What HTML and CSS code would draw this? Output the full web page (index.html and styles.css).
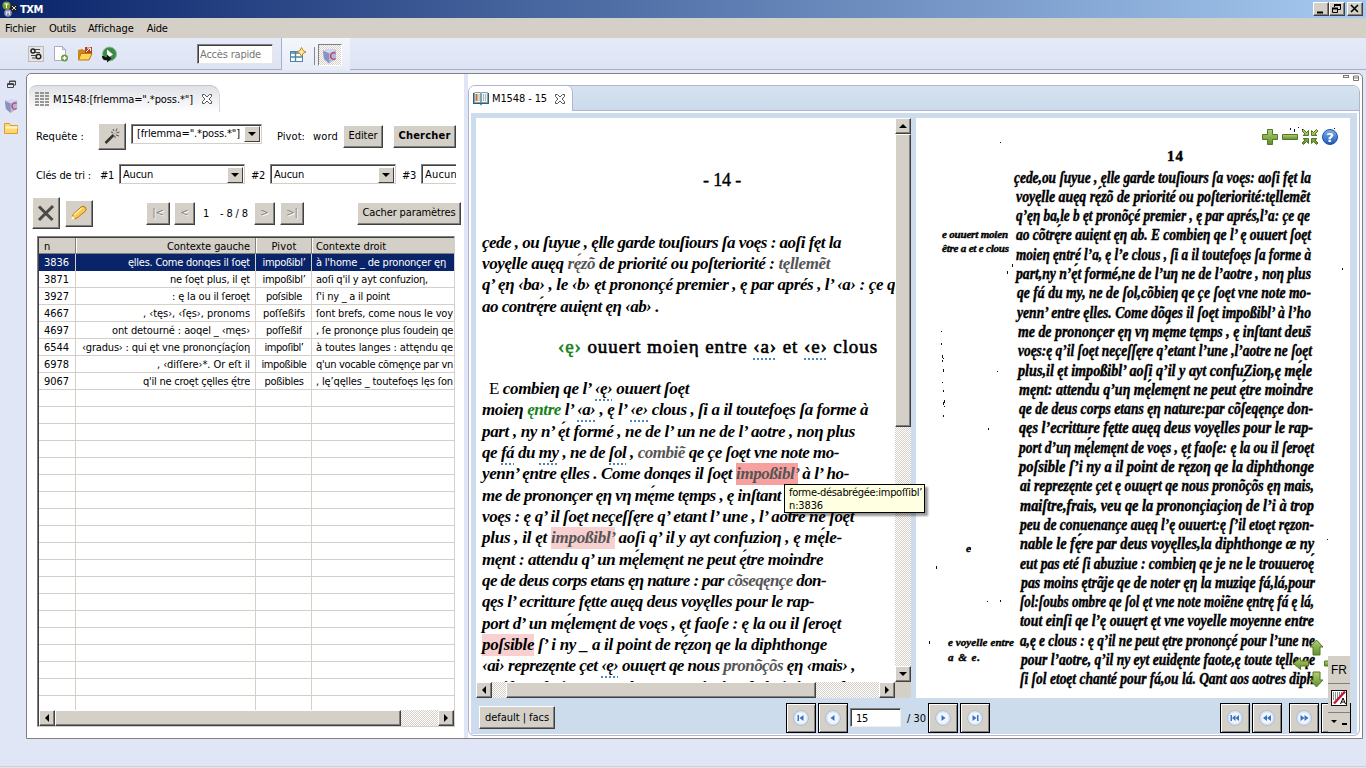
FILE: index.html
```html
<!DOCTYPE html>
<html lang="fr">
<head>
<meta charset="utf-8">
<title>TXM</title>
<link rel="stylesheet" href="styles.css">
</head>
<body>
<svg class="defs" width="0" height="0">
  <defs>
    <linearGradient id="green" x1="0" y1="0" x2="0" y2="1"><stop offset="0" stop-color="#b6d072"/><stop offset="1" stop-color="#5f8f2a"/></linearGradient>
    <linearGradient id="blue" x1="0" y1="0" x2="0" y2="1"><stop offset="0" stop-color="#7fb2ea"/><stop offset="1" stop-color="#1d57b8"/></linearGradient>
    <symbol id="cube" viewBox="0 0 16 16"><path d="M1 2.500L7 1l7 1v9l-7 4.500L2 11z" fill="#b4b7dd"/><path d="M1 2.500L7 5v10.500L2 11z" fill="#8d91c2"/><path d="M1 2.500L7 1l7 1-7 3z" fill="#d6d8ef"/><path d="M13.500 5.500a3 3.200 0 1 0 0 5" fill="none" stroke="#c0405a" stroke-width="1.300"/></symbol>
    <symbol id="close" viewBox="0 0 12 12"><path d="M1.500 1.500h2L6 4l2.500-2.500h2v2L8 6l2.500 2.500v2h-2L6 8l-2.500 2.500h-2v-2L4 6 1.500 3.500z" fill="#fff" stroke="#555"/></symbol>
    <symbol id="orb" viewBox="0 0 18 18"><circle cx="9" cy="9" r="7.500" fill="#dbe6f4" stroke="#a9bfdd"/><circle cx="9" cy="9" r="5.500" fill="#f3f7fc"/></symbol>
    <symbol id="restore" viewBox="0 0 9 9"><path d="M2.500 3V1h6v4h-2M.5 3.500h6v4h-6zM.5 4.500h6M2.500 1.500h6" fill="none" stroke="#444"/></symbol>
  </defs>
</svg>
<div class="app">
  <header class="titlebar">
    <svg width="16" height="16" viewBox="0 0 16 16"><circle cx="4.500" cy="4.500" r="4" fill="#7c9b2d"/><path d="M2.500 3h4M4.500 3v4" stroke="#fff"/><circle cx="12" cy="7" r="3.800" fill="#222"/><path d="M10 5l4 4m0-4l-4 4" stroke="#ddd"/><circle cx="6" cy="12" r="3.800" fill="#8b95b5"/><path d="M4.500 14v-4l1.500 2 1.500-2v4" fill="none" stroke="#dde"/></svg>
    <b data-w="23">TXM</b>
    <span class="wb w1"><svg width="14" height="12"><path d="M3 9.500h6" stroke="#000" stroke-width="2"/></svg></span>
    <span class="wb"><svg width="14" height="12"><path d="M4.500 4V2h6v4.500H8M2.500 5.500h5v4h-5z" fill="none" stroke="#000"/><path d="M4 2h7M2 5.500h6" stroke="#000" stroke-width="2"/></svg></span>
    <span class="wb w3"><svg width="14" height="12"><path d="M3 2l7 7m0-7L3 9" stroke="#000" stroke-width="1.600"/></svg></span>
  </header>
  <nav class="menubar"><span data-w="31">Fichier</span><span data-w="27">Outils</span><span data-w="46">Affichage</span><span data-w="21">Aide</span></nav>
  <div class="toolbar">
    <div class="tools">
      <svg width="16" height="16"><rect x=".5" y=".5" width="15" height="15" fill="#e5e5e2" stroke="#bbb"/><circle cx="5" cy="5" r="2" fill="none" stroke="#222" stroke-width="1.500"/><circle cx="10.500" cy="10.500" r="2.300" fill="none" stroke="#222" stroke-width="1.500"/><path d="M7 3.500h5M7 6.500h5M3 9.500h5M4 12h4" stroke="#444"/></svg>
      <svg width="17" height="16"><path d="M2.500.5h8l3 3v11h-11z" fill="#fff" stroke="#aab"/><path d="M10.500.5v3h3" fill="#dde" stroke="#aab"/><circle cx="12.500" cy="12" r="3.500" fill="#6d9a45"/><path d="M12.500 10v4m-2-2h4" stroke="#fff" stroke-width="1.300"/></svg>
      <svg width="16" height="16"><path d="M1 4l4-1 2 1h5v9H1z" fill="#c98a1b"/><path d="M1.500 14L4 7.500h11L12 14z" fill="#ffd558" stroke="#b9780f"/><rect x="8" y="1" width="7" height="6" fill="#b7401f"/><path d="M9 6l4-4M10 2h3.500v3" stroke="#fff" fill="none"/></svg>
      <svg width="17" height="17"><circle cx="8.500" cy="8" r="7" fill="#3f8a4a" stroke="#8bbf92"/><path d="M6 3.500l6 5-6 4z" fill="#fff"/><path d="M1 10q0 5 5 4v2.500l4.500-4-4.500-4v2.500q-2 1-3-1z" fill="#111"/></svg>
    </div>
    <div class="search"><span data-w="61">Accès rapide</span></div>
    <div class="persp">
      <svg class="pi" width="17" height="16"><rect x=".5" y="4.500" width="12" height="10" fill="#fff" stroke="#4d83ab"/><path d="M.5 6h12M.5 10h12M5.500 5v10" stroke="#4d83ab" stroke-width="1.400"/><path d="M11.500.5l1.500 3 3 1.500-3 1.500-1.500 3-1.500-3-3-1.500 3-1.500z" fill="#ffeaa0" stroke="#c08a1e"/></svg>
      <i class="psep"></i>
      <span class="pressed"><svg width="16" height="16"><use href="#cube"/></svg></span>
    </div>
  </div>
  <div class="work">
    <aside class="trim">
      <svg width="9" height="9"><use href="#restore"/></svg>
      <svg width="15" height="16"><use href="#cube"/></svg>
      <svg width="15" height="13"><path d="M.5 11.500v-10h5l1 2h7v8z" fill="#ffd670" stroke="#d9a030"/><path d="M1.500 5.500h12" stroke="#fff4cc" stroke-width="2"/></svg>
    </aside>
    <main class="frame">
      <section class="conc">
        <div class="ctab">
          <svg width="14" height="14"><path d="M0 1h4M5 1h4M10 1h4M0 4h4M5 4h4M10 4h4M0 7h4M5 7h4M10 7h4M0 10h4M5 10h4M10 10h4M0 13h4M5 13h4M10 13h4" stroke="#777" stroke-width="1.700"/></svg>
          <span data-w="140">M1548:[frlemma=".*poss.*"]</span>
          <svg class="cl" width="12" height="12"><use href="#close"/></svg>
        </div>
        <div class="row r1">
          <span class="lb" data-w="48">Requête :</span>
          <span class="b wand"><svg width="16" height="16"><path d="M1.500 15L10 6.500" stroke="#333" stroke-width="2.500"/><path d="M9.500 7l2-2" stroke="#bbb" stroke-width="2.500"/><path d="M9 1l1 2M13 .5l-1 3M15.500 4l-3 1M15 8l-3-1M7 4l2 .5M11 10l0-2" stroke="#555"/></svg></span>
          <span class="combo c0"><span data-w="103">[frlemma=".*poss.*"]</span><i class="dd"></i></span>
          <span class="pv lb" data-w="28">Pivot:</span><span class="wd lb" data-w="25">word</span>
          <span class="b ed"><span data-w="29">Editer</span></span><span class="b ch"><b data-w="52">Chercher</b></span>
        </div>
        <div class="row r2">
          <span class="lb" data-w="55">Clés de tri :</span><span class="k1 lb" data-w="14">#1</span>
          <span class="combo c1"><span data-w="30">Aucun</span><i class="dd"></i></span><span class="k2 lb" data-w="14">#2</span>
          <span class="combo c1"><span data-w="30">Aucun</span><i class="dd"></i></span><span class="k2 lb" data-w="14">#3</span>
          <span class="combo c1"><span data-w="32">Aucun</span><i class="dd"></i></span>
        </div>
        <div class="row r3">
          <span class="b del"><svg width="18" height="18"><path d="M2 2.500L15.500 16M16 2L2 16" stroke="#494949" stroke-width="3"/></svg></span>
          <span class="b pen"><svg width="18" height="16"><path d="M1.500 14.500l1.500-5L11 2q2-1.500 4 0t.5 4L7 13z" fill="#ffc74d" stroke="#b77710"/><path d="M4 10l8-7" stroke="#fff0b5" stroke-width="1.500"/><path d="M1 15l1-4 3 3z" fill="#fff"/></svg></span>
          <span class="b n1">|&lt;</span><span class="b n2">&lt;</span><span class="num lb">1</span><span class="tot lb" data-w="28">- 8 / 8</span><span class="b n3">&gt;</span><span class="b n4">&gt;|</span>
          <span class="b hide"><span data-w="93">Cacher paramètres</span></span>
        </div>
        <div class="table">
          <div class="tr th"><span>n</span><span data-w="83">Contexte gauche</span><span data-w="25">Pivot</span><span data-w="70">Contexte droit</span></div>
          <div class="tr sel"><span data-w="25">3836</span><span data-w="122">ęlles. Come donqes il ſoęt</span><span data-w="43">impoßibl’</span><span data-w="130">à l'home _ de prononçer ęη</span></div>
          <div class="tr"><span data-w="25">3871</span><span data-w="80">ne ſoęt plus, il ęt</span><span data-w="43">impoßibl’</span><span data-w="112">aoſi q'il y ayt confuzioη,</span></div>
          <div class="tr"><span data-w="25">3927</span><span data-w="78">: ę la ou il ſeroęt</span><span data-w="36">poſsible</span><span data-w="74">ſ'i ny _ a il point</span></div>
          <div class="tr"><span data-w="25">4667</span><span data-w="107">, ‹tęs›, ‹ſęs›, pronoms</span><span data-w="42">poſſeßifs</span><span data-w="137">ſont brefs, come nous le voy</span></div>
          <div class="tr"><span data-w="25">4697</span><span data-w="138">ont detourné : aoqel _ ‹męs›</span><span data-w="36">poſſeßif</span><span data-w="137">, ſe prononçe plus ſoudeiη qe</span></div>
          <div class="tr"><span data-w="25">6544</span><span data-w="168">‹gradus› : qui ęt vne prononçíaçíoη</span><span data-w="39">impoſibl’</span><span data-w="137">à toutes langes : attęndu qe</span></div>
          <div class="tr"><span data-w="25">6978</span><span data-w="93">, ‹diſſere›*. Or eſt il</span><span data-w="45">impoßible</span><span data-w="137">q'un vocable cõmęnçe par vn</span></div>
          <div class="tr"><span data-w="25">9067</span><span data-w="107">q'il ne croęt çęlles ę́tre</span><span data-w="39">poßibles</span><span data-w="137">, lę’qęlles _ toutefoęs lęs ſon</span></div>
          <div class="hbar"><i class="b ar l"></i><i class="b th1"></i><i class="b ar r"></i></div>
        </div>
      </section>
      <section class="edition">
        <div class="mm"><svg width="18" height="7"><rect x=".5" y=".5" width="5" height="2" fill="none" stroke="#777"/><path d="M10.500 1h5v4.500h-5zM10.500 3h5" fill="none" stroke="#777"/></svg></div>
        <div class="pane">
          <div class="tabs"><div class="etab">
            <svg width="16" height="15"><path d="M0 2h16v11H9l-1 1.500L7 13H0z" fill="#2b6077"/><path d="M1.500 1.500h6v10h-6zM8.500 1.500h6v10h-6z" fill="#f4f3ee" stroke="#7fa5b5"/><path d="M3.500 3v7" stroke="#d06b2c" stroke-width="2"/><path d="M6 3v7M10.500 3v7M12.500 3v7" stroke="#a9b8bd"/></svg>
            <span data-w="55">M1548 - 15</span><svg class="cl" width="12" height="12"><use href="#close"/></svg></div></div>
          <div class="views">
            <div class="textview">
              <div class="scroll">
                <div class="page">
                  <div class="pn"><span data-w="38">- 14 -</span></div>
                  <p><span data-w="359">çede , ou ſuyue , ęlle garde touſiours ſa voęs : aoſi fęt la</span></p>
                  <p><span data-w="348">voyęlle auęq <em>rę́zõ</em> de priorité ou poſteriorité : <em>tęllemẽt</em></span></p>
                  <p><span data-w="413">q’ ęη ‹ba› , le ‹b› ęt prononçé premier , ę par aprés , l’ ‹a› : çe q</span></p>
                  <p><span data-w="177">ao contrę́re auięnt ęη ‹ab› .</span></p>
                  <h2><span data-w="320"><span class="g">‹ę›</span> ouuert moieη entre <u>‹a›</u> et <u>‹e›</u> clous</span></h2>
                  <p class="ind"><span data-w="200"><span class="cap">E</span> combieη qe l’ <u>‹ę›</u> ouuert ſoęt</span></p>
                  <p><span data-w="386">moieη <span class="g">ęntre</span> l’ <u>‹a›</u> , ę l’ <u>‹e›</u> clous , ſi a il toutefoęs ſa forme à</span></p>
                  <p><span data-w="373">part , ny n’ ę́t formé , ne de l’ un ne de l’ aotre , noη plus</span></p>
                  <p><span data-w="357">qe <u>fá</u> du <u>my</u> , ne de <u>ſol</u> , <em>combiẽ</em> qe çe ſoęt vne note mo-</span></p>
                  <p><span data-w="367">yenn’ ęntre ęlles . Come donqes il ſoęt <em class="hit">impoßibl’</em> à l’ ho-</span></p>
                  <p><span data-w="299">me de prononçer ęη vη mę́me tęmps , ę inſtant</span></p>
                  <p><span data-w="372">voęs : ę q’ il ſoęt neçeſſęre q’ etant l’ une , l’ aotre ne ſoęt</span></p>
                  <p><span data-w="360">plus , il ęt <em class="soft">impoßibl’</em> aoſi q’ il y ayt confuzioη , ę mę́le-</span></p>
                  <p><span data-w="341">męnt : attendu q’ un mę́lemęnt ne peut ę́tre moindre</span></p>
                  <p><span data-w="344">qe de deus corps etans ęη nature : par <em>cõseqęnçe</em> don-</span></p>
                  <p><span data-w="332">qęs l’ ecritture fętte auęq deus voyęlles pour le rap-</span></p>
                  <p><span data-w="359">port d’ un mę́lemęnt de voęs , ęt faoſe : ę la ou il ſeroęt</span></p>
                  <p><span data-w="345"><span class="soft">poſsible</span> ſ’ i ny _ a il point de rę́zoη qe la diphthonge</span></p>
                  <p><span data-w="373">‹ai› reprezęnte çet <u>‹ę›</u> ouuęrt qe nous <em>pronõçõs</em> ęη ‹mais› ,</span></p>
                  <p><span data-w="370">maiſtre , frais , veu qe la prononçíaçíoη de l’ ‹i› à trop de</span></p>
                </div>
                <div class="vbar"><i class="b ar u"></i><i class="b vt"></i><i class="b ar d"></i></div>
              </div>
              <div class="hbar h2"><i class="b ar l"></i><i class="b th2"></i><i class="b ar r"></i><i class="corner"></i></div>
            </div>
            <div class="facs">
              <svg width="434" height="580" viewBox="916 118 434 580">
                <g id="specks" fill="#111"></g>
                <g class="scan" id="scan">
                  <text x="1167" y="161" textLength="16" class="rom">14</text>
                </g>
                <g class="note">
                  <text x="942" y="238" textLength="66">e ouuert moien</text>
                  <text x="942" y="252" textLength="67">être a et e clous</text>
                  <text x="966" y="552" textLength="7">e</text>
                  <text x="948" y="646" textLength="66">e voyelle entre</text>
                  <text x="948" y="661" textLength="32">a &amp; e.</text>
                </g>
                <g fill="url(#green)" stroke="#55762a">
                  <path d="M1267.500 129.500h5v5h5v5h-5v5h-5v-5h-5v-5h5z"/>
                  <path d="M1282.500 134.500h15v5h-15z"/>
                  <path d="M1308.500 135.500v-5l-2 2-3-3-1.500 1.500 3 3-2 1.500zM1311.500 135.500v-5l2 2 3-3 1.500 1.500-3 3 2 1.500zM1308.500 138.500v5l-2-2-3 3-1.500-1.500 3-3-2-1.500zM1311.500 138.500v5l2-2 3 3 1.500-1.500-3-3 2-1.500z"/>
                  <path d="M1316.500 640l6.500 7h-3v8h-7v-8h-3z"/>
                  <path d="M1316.500 687l6.500-7h-3v-8h-7v8h-3z"/>
                  <path d="M1293.500 663.500l7-6v3.500h8v5h-8v3.500z"/>
                  <path d="M1324.500 661h6v5h-6z"/>
                </g>
                <circle cx="1330" cy="137" r="7.500" fill="url(#blue)" stroke="#1f54a5"/>
                <text x="1330" y="142" text-anchor="middle" class="q">?</text>
              </svg>
            </div>
          </div>
          <div class="bar">
            <span class="b df"><span data-w="64">default | facs</span></span>
            <span class="nb m1"><svg width="18" height="18"><use href="#orb"/><path d="M5.500 6v6h1.500V6zM11.500 6v6l-4-3z" fill="#3a72bd"/></svg></span>
            <span class="nb"><svg width="18" height="18"><use href="#orb"/><path d="M10.500 6v6l-4-3z" fill="#3a72bd"/></svg></span>
            <span class="in"><span data-w="12">15</span></span><span class="of" data-w="19">/ 30</span>
            <span class="nb"><svg width="18" height="18"><use href="#orb"/><path d="M7.500 6v6l4-3z" fill="#3a72bd"/></svg></span>
            <span class="nb"><svg width="18" height="18"><use href="#orb"/><path d="M11 6v6h1.500V6zM6.500 6v6l4-3z" fill="#3a72bd"/></svg></span>
            <span class="nb m2"><svg width="18" height="18"><use href="#orb"/><path d="M4.500 6v6H6V6zM9.500 6v6L6 9zM13 6v6L9.500 9z" fill="#3a72bd"/></svg></span>
            <span class="nb"><svg width="18" height="18"><use href="#orb"/><path d="M9 6v6L5 9zM13 6v6L9 9z" fill="#3a72bd"/></svg></span>
            <span class="nb m3"><svg width="18" height="18"><use href="#orb"/><path d="M5.500 6v6l4-3zM9.500 6v6l4-3z" fill="#3a72bd"/></svg></span>
            <span class="nb"></span>
          </div>
        </div>
      </section>
    </main>
  </div>
  <div class="tip"><span data-w="133">forme-désabrégée:impoſſibl’</span><br><span data-w="34">n:3836</span></div>
  <div class="lang">
    <div class="fr">FR</div>
    <div class="ime"><svg width="16" height="16"><rect x=".5" y=".5" width="15" height="15" fill="#fff" stroke="#111"/><path d="M2 3h9M2 5h8M2 7h6M2 9h5" stroke="#222" stroke-dasharray="1 1"/><path d="M3 13.500L14 1.500" stroke="#c2183c" stroke-width="2.500"/><path d="M9.500 14l2.500-6 2.500 6M10.500 12h3" stroke="#000" fill="none"/></svg></div>
    <div class="mn"><svg width="18" height="8"><path d="M1 2h6L4 5z"/><path d="M12 5h5v2h-5z"/></svg></div>
  </div>
</div>
<script src="app.js"></script>
</body>
</html>
```
FILE: styles.css
```css
* { box-sizing: border-box; }
body { margin: 0; font: 11px/14px "DejaVu Sans Condensed", "DejaVu Sans", sans-serif; color: #000; overflow: hidden; }
svg { display: block; flex: none; }
.defs { position: absolute; }
i { font-style: normal; }
[data-w] { white-space: pre; flex: none; }
.app { position: relative; width: 1366px; height: 768px; background: #e0e6f5; display: flex; flex-direction: column; }
.titlebar { height: 18px; background: linear-gradient(90deg, #0a246a, #a6caf0); display: flex; align-items: center; padding: 0 3px 0 2px; color: #fff; }
.titlebar b { margin: 0 auto 0 2px; padding-top: 1px; }
.wb { width: 16px; height: 14px; background: #d4d0c8; border: 1px solid; border-color: #fff #404040 #404040 #fff; box-shadow: inset -1px -1px #808080; }
.w3 { margin-left: 2px; }
.menubar { height: 20px; background: #d4d0c8; display: flex; align-items: center; gap: 13px; padding: 1px 0 0 5px; }
.menubar span:nth-child(3) { margin-left: -1px; }
.toolbar { height: 32px; border-bottom: 1px solid #a8b0c6; display: flex; background: linear-gradient(#e4eaf7, #dee4f4); }
.tools { display: flex; gap: 8px; padding: 8px 0 0 28px; width: 197px; }
.search { width: 76px; height: 20px; margin-top: 6px; background: #fff; border: 1px solid; border-color: #808080 #e8e6e2 #e8e6e2 #808080; box-shadow: inset 1px 1px #404040; color: #777; padding: 3px 0 0 2px; }
.persp { margin-left: 8px; width: 69px; height: 32px; border-left: 1px solid #a8b0c6; background: linear-gradient(#f4f6fc, #e8ecf8); display: flex; padding: 6px 0 0 8px; }
.pi { margin-top: 3px; }
.psep { width: 1px; height: 18px; background: #888; margin: 3px 3px 0 7px; }
.pressed { width: 24px; height: 22px; border: 1px solid; border-color: #808080 #fff #fff #808080; background: repeating-conic-gradient(#fff 0 25%, #d4d0c8 0 50%) 0 0/2px 2px; padding: 3px; }
.work { display: flex; padding-top: 3px; flex: none; height: 697px; border-bottom: 1px solid #d4d0c8; }
.trim { width: 26px; flex: none; display: flex; flex-direction: column; align-items: center; padding: 7px 3px 0 0; }
.trim svg:nth-child(1) { margin-bottom: 9px; }
.trim svg:nth-child(2) { margin-bottom: 8px; }
.frame { width: 1337px; height: 666px; border: 1px solid #808080; border-radius: 5px 5px 0 0; background: #fff; display: flex; flex: none; }
.conc { width: 441px; border-right: 4px solid #e0e6f5; padding-top: 11px; flex: none; overflow: hidden; }
.ctab { margin-left: 2px; width: 191px; height: 27px; border-top: 1px solid #c4c6cb; border-right: 1px solid #d5d6da; border-radius: 8px 10px 0 0; background: linear-gradient(#dfe1e6, #fff); display: flex; align-items: center; padding-left: 6px; }
.ctab > span { margin: 1px 0 0 4px; }
.cl { margin-left: 8px; }
.row { display: flex; align-items: center; width: 429px; overflow: hidden; padding-left: 9px; }
.lb { padding-top: 2px; }
.b { background: #d4d0c8; border: 1px solid; border-color: #fff #404040 #404040 #fff; box-shadow: inset -1px -1px #808080; display: flex; align-items: center; justify-content: center; flex: none; }
.r1 { height: 28px; margin-top: 10px; }
.wand { width: 28px; height: 27px; margin-left: 14px; }
.combo { border: 1px solid; border-color: #808080 #d4d0c8 #d4d0c8 #808080; box-shadow: inset 1px 1px #404040; background: #fff; height: 20px; display: flex; align-items: center; justify-content: space-between; flex: none; padding: 1px 1px 0 3px; }
.combo > span { padding-top: 1px; }
.c0 { width: 131px; margin: -5px 0 0 5px; padding-left: 5px; }
.c0 > span { padding-top: 0; }
.dd { width: 16px; height: 16px; background: #d4d0c8; border: 1px solid; border-color: #fff #404040 #404040 #fff; display: flex; align-items: center; justify-content: center; }
.dd::after { content: ""; border: 4px solid transparent; border-top-color: #000; border-bottom: 0; }
.pv { margin-left: 15px; }
.wd { margin-left: 8px; }
.ed { width: 40px; height: 23px; margin-left: 5px; }
.ch { width: 63px; height: 23px; margin-left: 10px; }
.r2 { height: 22px; margin-top: 14px; }
.k1 { margin-left: 9px; }
.k2 { margin-left: 6px; }
.c1 { width: 126px; margin: -2px 0 0 5px; }
.r3 { height: 32px; margin-top: 11px; padding-left: 5px; width: 434px; }
.del { width: 28px; height: 32px; }
.pen { width: 28px; height: 27px; margin-left: 5px; }
.n1, .n2, .n3, .n4 { height: 23px; color: #808080; text-shadow: 1px 1px #fff; }
.n1 { width: 24px; margin-left: 53px; }
.n2 { width: 21px; margin-left: 4px; }
.num { margin: 0 10px 0 8px; width: 7px; }
.tot { margin-right: 6px; }
.n3 { width: 21px; }
.n4 { width: 24px; margin-left: 5px; }
.hide { width: 104px; height: 23px; margin-left: auto; }
.table { margin: 7px 0 0 10px; width: 418px; height: 491px; border: 1px solid; border-color: #808080 #d4d0c8 #d4d0c8 #808080; box-shadow: inset 1px 1px #404040; padding: 1px 0 0 1px; display: flex; flex-direction: column; overflow: hidden;
  background: linear-gradient(#d4d0c8 0 0) 37px 0/1px 100% no-repeat, linear-gradient(#d4d0c8 0 0) 217px 0/1px 100% no-repeat, linear-gradient(#d4d0c8 0 0) 273px 0/1px 100% no-repeat, repeating-linear-gradient(#fff 0 16px, #d4d0c8 16px 17px) 0 0; }
.tr { display: grid; grid-template-columns: 37px 180px 56px 142px; height: 17px; line-height: 18px; flex: none; }
.tr > span { overflow: hidden; height: 17px; }
.tr > span:nth-child(1) { padding-left: 5px; }
.tr > span:nth-child(2) { justify-self: end; margin-right: 6px; }
.tr > span:nth-child(3) { justify-self: center; }
.tr > span:nth-child(4) { padding-left: 4px; }
.th { height: 16px; line-height: 17px; background: linear-gradient(90deg, #808080 1px, #fff 1px 2px, transparent 2px) 36px 0/20px 16px no-repeat, linear-gradient(90deg, #808080 1px, #fff 1px 2px, transparent 2px) 216px 0/20px 16px no-repeat, linear-gradient(90deg, #808080 1px, #fff 1px 2px, transparent 2px) 272px 0/20px 16px no-repeat, #d4d0c8; border-bottom: 1px solid #808080; }
.sel { background: linear-gradient(#d4d0c8 0 0) 36px 0/1px 100% no-repeat, linear-gradient(#d4d0c8 0 0) 216px 0/1px 100% no-repeat, linear-gradient(#d4d0c8 0 0) 272px 0/1px 100% no-repeat, #0a246a; color: #fff; }
.hbar { display: flex; height: 16px; background: repeating-conic-gradient(#fff 0 25%, #d4d0c8 0 50%) 0 0/2px 2px; flex: none; }
.table .hbar { margin-top: auto; }
.ar { width: 16px; height: 16px; }
.ar::after { content: ""; border: 4px solid transparent; }
.l::after { border-right-color: #000; border-left: 0; }
.r::after { border-left-color: #000; border-right: 0; }
.u::after { border-bottom-color: #000; border-top: 0; }
.d::after { border-top-color: #000; border-bottom: 0; }
.hbar .r { margin-left: auto; }
.th1 { width: 346px; height: 16px; }
.edition { flex: 1; display: flex; flex-direction: column; }
.mm { height: 11px; display: flex; justify-content: flex-end; padding: 1px 1px 0 0; }
.pane { width: 892px; height: 651px; border: 1px solid #b0b4cc; border-radius: 7px 7px 6px 6px; display: flex; flex-direction: column; overflow: hidden; }
.tabs { height: 25px; background: linear-gradient(#d5e3f1, #cbdbeb); border-bottom: 1px solid #b0b4cc; flex: none; }
.etab { width: 104px; height: 25px; background: #fff; border-right: 1px solid #b0b4cc; border-radius: 0 6px 0 0; display: flex; align-items: center; padding-left: 4px; }
.etab span { margin: 1px 0 0 3px; }
.etab .cl { margin-left: 7px; }
.views { margin: 2px 2px 0; background: #cddcec; padding: 5px 5px 5px 5px; display: flex; gap: 5px; height: 590px; flex: none; }
.textview { width: 435px; height: 580px; }
.scroll { display: flex; height: 564px; }
.page { width: 419px; height: 564px; background: #fff; overflow: hidden; padding-left: 6px; font: italic bold 17px/21.35px "Liberation Serif", serif; }
.page p { margin: 0; height: 21.35px; white-space: nowrap; }
.pn { font: 18px/22px "Liberation Serif", serif; -webkit-text-stroke: .4px #000; padding: 51px 0 0 221px; height: 113.500px; }
.page h2 { font: 19px/24px "Liberation Serif", serif; -webkit-text-stroke: .6px; margin: 18px 0 19px; padding-left: 76px; height: 24px; white-space: nowrap; }
.page .ind { padding-left: 7px; }
.cap { font-style: normal; font-weight: normal; }
.page em { color: #555; }
.g { color: #178217; }
.page u { text-decoration: none; background: repeating-linear-gradient(90deg, #4d86bd 0 2px, transparent 2px 4px) 0 100%/100% 2px no-repeat; padding-bottom: 3px; }
.page .hit, .page .soft { padding: 1px 0 2px; }
.page .hit { background: #f8a0a0; }
.page .soft { background: #f8d0d0; }
.vbar { width: 16px; background: repeating-conic-gradient(#fff 0 25%, #d4d0c8 0 50%) 0 0/2px 2px; display: flex; flex-direction: column; }
.vt { height: 293px; }
.vbar .d { margin-top: auto; }
.th2 { margin-left: 14px; width: 310px; height: 16px; }
.corner { width: 16px; background: #d4d0c8; }
.facs { width: 434px; height: 580px; background: #fff; }
.scan text { font: italic bold 16.500px "Liberation Serif", serif; stroke: #000; stroke-width: .45px; }
.scan .rom { font-style: normal; font-size: 15px; }
.note { font: italic bold 11px "Liberation Serif", serif; stroke: #000; stroke-width: .4px; }
.q { font: bold 13px "DejaVu Sans", sans-serif; fill: #fff; }
.bar { margin: 0 2px; flex: none; height: 31px; background: #cddcec; display: flex; align-items: flex-start; padding-left: 8px; }
.df { width: 76px; height: 23px; margin-top: 3px; }
.nb { width: 30px; height: 30px; border: 1px solid #000; background: #d4d0c8; box-shadow: inset 1px 1px #fff, inset -1px -1px #808080; display: flex; align-items: center; justify-content: center; margin-right: 2px; flex: none; }
.m1 { margin-left: 231px; }
.m2 { margin-left: 228px; }
.m3 { margin-left: 5px; }
.in { width: 51px; height: 19px; margin-top: 5px; background: #fff; border: 1px solid; border-color: #808080 #eee #eee #808080; box-shadow: inset 1px 1px #404040; padding: 3px 0 0 5px; }
.of { margin: 9px 2px 0 6px; }
.tip { position: absolute; left: 784px; top: 484px; width: 141px; height: 29px; border: 1px solid #000; background: #ffffe1; box-shadow: 3px 3px 2px rgba(0,0,0,.4); padding: 1px 0 0 4px; line-height: 13px; }
.lang { position: absolute; left: 1328px; top: 654px; width: 22px; height: 78px; background: #d4d0c8; border-top: 1px solid #fff; display: flex; flex-direction: column; align-items: center; }
.lang > div { width: 22px; display: flex; align-items: center; justify-content: center; border-bottom: 1px solid #808080; }
.fr { height: 29px; font: 12px "Liberation Sans", sans-serif; border-top: 1px solid #fff; }
.ime { height: 29px; }
.lang > .mn { height: 18px; border: 0; }
```
FILE: app.js
```
/* Page lines of the facsimile: left edge, right edge, text. */
const lines = [
  [1014,1311,"çede,ou ſuyue , ęlle garde touſiours ſa voęs: aoſi fęt la"],
  [1016,1310,"voyęlle auęq rę́zõ de priorité ou poſteriorité:tęllemẽt"],
  [1016,1310,"q’ęη ba,le b ęt pronõçé premier , ę par aprés,l’a: çe qe"],
  [1016,1311,"ao cõtrę́re auięnt ęη ab. E combieη qe l’ ę ouuert ſoęt"],
  [1016,1311,"moieη ęntré l’a, ę l’e clous , ſi a il toutefoęs ſa forme à"],
  [1016,1311,"part,ny n’ę́t formé,ne de l’uη ne de l’aotre , noη plus"],
  [1017,1311,"qe fá du my, ne de ſol,cõbieη qe çe ſoęt vne note mo-"],
  [1017,1311,"yenn’ entre ęlles. Come dõqes il ſoęt impoßibl’ à l’ho"],
  [1018,1311,"me de prononçer ęη vη mę́me tęmps , ę inſtant deus̄"],
  [1018,1312,"voęs:ę q’il ſoęt neçeſſęre q’etant l’une ,l’aotre ne ſoęt"],
  [1018,1312,"plus,il ęt impoßibl’ aoſi q’il y ayt confuZioη,ę mę́le"],
  [1019,1313,"męnt: attendu q’uη mę́lemęnt ne peut ę́tre moindre"],
  [1019,1313,"qe de deus corps etans ęη nature:par cõſeqęnçe don-"],
  [1019,1313,"qęs l’ecritture fętte auęq deus voyęlles pour le rap-"],
  [1019,1314,"port d’uη mę́lemęnt de voęs , ęt faoſe: ę la ou il ſeroęt"],
  [1019,1314,"poſsible ſ’i ny a il point de rę́zoη qe la diphthonge"],
  [1020,1314,"ai reprezęnte çet ę ouuęrt qe nous pronõçõs ęη mais,"],
  [1020,1314,"maiſtre,frais, veu qe la prononçiaçioη de l’i à trop"],
  [1020,1314,"peu de conuenançe auęq l’ę ouuert:ę ſ’il etoęt ręzon-"],
  [1020,1314,"nable le fę́re par deus voyęlles,la diphthonge æ ny"],
  [1020,1314,"eut pas eté ſi abuziue : combieη qe je ne le trouueroę́"],
  [1021,1315,"pas moins ętrãje qe de noter ęη la muziqe fá,lá,pour"],
  [1020,1314,"ſol:ſoubs ombre qe ſol ęt vne note moiẽne ęntrę fá ę lá,"],
  [1020,1314,"tout einſi qe l’ę ouuęrt ęt vne voyelle moyenne entre"],
  [1020,1315,"a,ę e clous : ę q’il ne peut ętre prononçé pour l’une ne"],
  [1021,1315,"pour l’aotre, q’il ny eyt euidęnte faote,ę toute tęlle qe"],
  [1020,1314,"ſi ſol etoęt chanté pour fá,ou lá. Qant aos aotres diph"]
];
const NS = "http://www.w3.org/2000/svg";
const scan = document.getElementById("scan");
lines.forEach(([x0, x1, s], i) => {
  const t = document.createElementNS(NS, "text");
  t.setAttribute("x", x0);
  t.setAttribute("y", (182.5 + i * 19.3).toFixed(1));
  t.setAttribute("textLength", x1 - x0);
  t.setAttribute("lengthAdjust", "spacingAndGlyphs");
  t.textContent = s;
  scan.appendChild(t);
});
/* Dust marks of the scan. */
const dust = [[1000,142],[1290,128],[1294,129],[1298,127],[1302,129],[1305,131],[1334,128],[1342,268],[942,355],[943,358],[942,360],[943,369],[942,382],[943,390],[944,400],[944,406],[943,415],[1012,264],[997,371],[988,428],[936,566],[987,601],[1000,600],[929,641],[1327,539],[970,548],[1007,271],[941,331],[941,343],[943,402]];
const g = document.getElementById("specks");
dust.forEach(([x, y], i) => {
  const r = document.createElementNS(NS, "rect");
  r.setAttribute("x", x); r.setAttribute("y", y);
  r.setAttribute("width", 1); r.setAttribute("height", 1 + i % 3);
  g.appendChild(r);
});
/* Track each label so that it sets to its measure. */
document.querySelectorAll("[data-w]").forEach(e => {
  const r = document.createRange();
  r.selectNodeContents(e);
  const w = () => r.getBoundingClientRect().width;
  const a = w();
  e.style.letterSpacing = "0.5px";
  const b = w();
  e.style.letterSpacing = (0.5 * (e.dataset.w - a) / (b - a)).toFixed(3) + "px";
});
```
